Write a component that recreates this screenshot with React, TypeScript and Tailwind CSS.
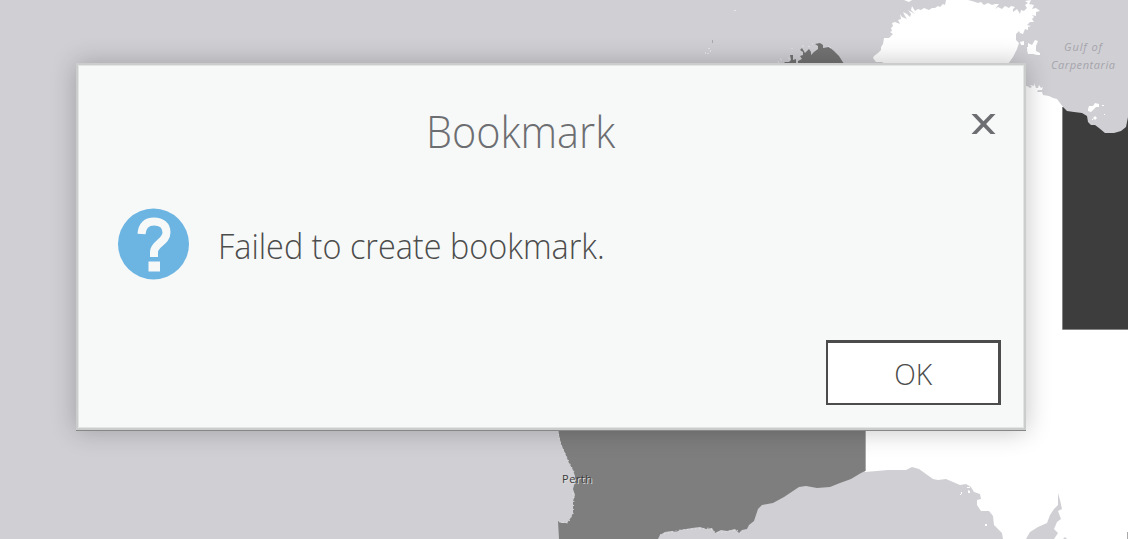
function MapBackdrop() {
  return (
    <svg className="absolute inset-0" width="1128" height="539" viewBox="0 0 1128 539" aria-hidden="true">
      <rect width="1128" height="539" fill="#d0cfd4" />

      {/* Northern Territory and the land east of the dialog */}
      <path
        fill="#fff"
        d="M946 0L945 5L943 4L940 7L938 6L935 8L932 8L929 10L924 8L921 10L918 9L915 11L912 6L911 10L915 14L908 10L911 14L910 17L907 14L903 12L905 16L907 19L902 17L900 14L901 19L898 20L900 24L895 22L892 23L893 26L891 28L892 31L890 32L893 34L889 38L884 38L883 44L881 47L881 50L878 53L874 56L873 58L876 62L882 62L885 64L1008 64L1013 57L1017 49L1019 43L1016 40L1016 34L1019 31L1020 33L1023 34L1025 29L1028 30L1028 27L1031 26L1027 25L1030 22L1034 22L1032 19L1034 17L1032 15L1036 16L1036 12L1040 11L1036 8L1032 9L1034 5L1029 4L1031 0L1025 1L1028 3L1025 5L1027 8L1024 11L1021 10L1020 14L1017 9L1013 12L1013 9L1015 7L1011 6L1009 8L1005 6L1002 9L998 7L995 9L999 4L995 4L992 5L988 3L984 5L981 2L978 3L972 1L968 0Z"
      />
      <path
        fill="#fff"
        d="M904 0L912 0L909 2ZM1028 43L1032 45L1035 40L1038 41L1036 46L1036 51L1040 53L1040 55L1037 55L1033 54L1028 54L1027 50L1028 48ZM1020 42L1024 41L1024 45L1021 45ZM1027 47h1v2h-1z"
      />
      <path
        fill="#fff"
        d="M1020 86L1027 86L1030 88L1032 87L1030 85L1034 86L1034 83L1036 88L1038 88L1039 85L1041 88L1043 87L1042 90L1038 90L1037 92L1042 92L1043 95L1049 96L1053 98L1057 99L1063 107V329H1128V539H1054L1058 533L1054 529L1057 522L1061 519L1058 511L1062 509L1060 500L1058 493L1058 505L1054 509L1050 515L1047 523L1038 527L1030 532L1026 539H1003L1002 533L994 525L993 516L989 511L981 511L977 505L977 500L981 499L980 494L974 492L971 487L966 484L960 485L953 482L946 479L938 480L933 479L926 474L919 469L912 467L906 470L888 470L865 472V425H1020Z"
      />
      <path
        fill="#d0cfd4"
        d="M958 493L964 485L970 488L970 491L965 489L961 492ZM1063 539L1065 537L1067 539Z"
      />
      <path fill="#fff" d="M961 492h1v2h-1zM967 487h3v1h-3zM968 490l2 1v2h-2zM985 524h2v2h-2zM960 494h1v1h-1z" />
      <path fill="#aaa" d="M1127 532h1v7h-1z" />

      {/* Queensland */}
      <path
        fill="#3d3d3d"
        d="M1063 107L1067 111L1074 112L1082 113L1087 116L1088 122L1091 125L1095 125L1099 128L1105 133L1114 133L1121 131L1126 127L1128 117V329H1063Z"
      />
      <path d="M1062.500 107V329.500H1128" fill="none" stroke="#858585" />
      <path
        fill="#fff"
        d="M1088 109L1089 106L1093 106L1095 103L1099 104L1099 107L1096 107L1091 112L1088 111ZM1093 118L1095 116L1097 118L1095 120ZM1102 105h2v1h-2zM1092 119h1v1h-1zM1104 114h1v1h-1z"
      />

      {/* Western Australia */}
      <path
        fill="#737373"
        d="M783 64L785 62L789 62L791 60L790 55L793 55L793 60L796 59V64L798 64V61L802 59L800 56L803 55V52L800 50L802 48L805 53L807 51L809 49L811 52L811 55L814 52L818 49L818 46L815 44L820 43L823 45L823 48L829 47L834 51L839 56L844 64Z"
      />
      <path
        fill="none"
        stroke="#e6e6e8"
        d="M778 61l1 2M780 58l2 3M792 48v1M788 58l2 1M802 46h2M808 46l2 1M812 44h1M734 10.500h2M705.500 54v-2M708 48.500h2M710.500 50v2M707 53.500h2M828 46l3 2"
      />
      <path stroke="#aaa" d="M712.500 40v3" />
      <path
        fill="#7e7e7e"
        d="M558 425L559 435L561 444L565 453L569 463L573 470L575 476L575 482L573 489L575 495L573 501L573 513L570 519L567 523L561 523L558 521L559 539H658L660 535L665 532L672 531L676 532L680 530L686 529L692 528L700 527L706 529L712 528L715 533L721 530L727 531L735 529L739 533L742 530L747 529L749 525L754 521L756 515L758 509L762 505L773 503L784 497L793 491L799 487L806 486L817 488L830 487L840 483L851 479L861 473L865 471V425Z"
      />
      <path
        fill="none"
        stroke="#e8e8ea"
        strokeDasharray="1 3"
        d="M558 430L559 438L562 447L568 460L574 472M573 493L574 498L573 514L568 523L559 522M660 535L680 530L710 528L716 533L737 530L741 533"
      />
      <path d="M865.500 430V471" stroke="#aaa" />

      <g fontFamily="'Open Sans', sans-serif" fontSize="11">
        <g fill="#a5a5ab" fontStyle="italic">
          <text x="1064" y="51" textLength="38">
            Gulf of
          </text>
          <text x="1051" y="69" textLength="64">
            Carpentaria
          </text>
        </g>
        <text x="562" y="483" textLength="30" fill="#3c3c3c" className="[text-shadow:1px_1px_0_#dedede]">
          Perth
        </text>
      </g>
    </svg>
  );
}

function QuestionIcon() {
  return (
    <svg width="72" height="72" viewBox="0 0 72 72" aria-hidden="true">
      <circle cx="35.500" cy="36" r="35.500" fill="#6cb4e2" />
      <path
        d="M23.500 26C24 17.500 28.500 13.500 36 13.500C43.500 13.500 48.500 17.500 48.500 24.500C48.500 34 36 35.500 36 44V49"
        fill="none"
        stroke="#f7f9f8"
        strokeWidth="8"
      />
      <path d="M30.500 53.500h11.500v10H30.500z" fill="#f7f9f8" />
    </svg>
  );
}

function CloseIcon() {
  return (
    <svg width="26" height="22" viewBox="0 0 26 22" aria-hidden="true">
      <path d="M0.500 1h5L12.500 8.200L19.500 1h5L15.100 11L24.500 21h-5L12.500 13.800L5.500 21H0.500L9.900 11Z" fill="#6d6e72" />
    </svg>
  );
}

function BookmarkDialog() {
  return (
    <div role="dialog" className="w-[950px] shadow-[0_0_24px_rgba(0,0,0,0.24)]">
      <div className="flex h-[367px] flex-col border-2 border-[#cbcdcc] bg-[#f7f9f8]">
        <div className="flex flex-1 flex-col border border-[#e3e5e4]">
          <header className="flex h-[120px] items-start pt-[35px] pr-[26px]">
            <h1 className="ml-[347px] w-[400px] origin-left scale-x-[0.92] text-[45px] leading-[60px] font-light whitespace-nowrap text-[#6d6e72]">
              Bookmark
            </h1>
            <button aria-label="Close" className="mt-[12px] ml-auto">
              <CloseIcon />
            </button>
          </header>
          <div className="flex h-[120px] items-start pt-[22px] pl-[39px]">
            <QuestionIcon />
            <p className="mt-[13px] ml-[28px] origin-left scale-x-[0.926] text-[35px] leading-[50px] font-light whitespace-nowrap text-[#4c4c4c]">
              Failed to create bookmark.
            </p>
          </div>
          <footer className="flex justify-end pt-[34px] pr-[22px]">
            <button className="flex h-[65px] w-[175px] items-center justify-center border-2 border-t-3 border-r-3 border-[#4c4c4c] bg-white text-[30px] font-light text-[#4c4c4c]">
              <span className="scale-x-[0.94]">OK</span>
            </button>
          </footer>
        </div>
      </div>
      <div className="h-px bg-[#878787]" />
    </div>
  );
}

export default function App() {
  return (
    <main className="relative h-[539px] w-[1128px] overflow-hidden font-['Open_Sans',sans-serif]">
      <MapBackdrop />
      <div className="relative pt-[63px] pl-[76px]">
        <BookmarkDialog />
      </div>
    </main>
  );
}
